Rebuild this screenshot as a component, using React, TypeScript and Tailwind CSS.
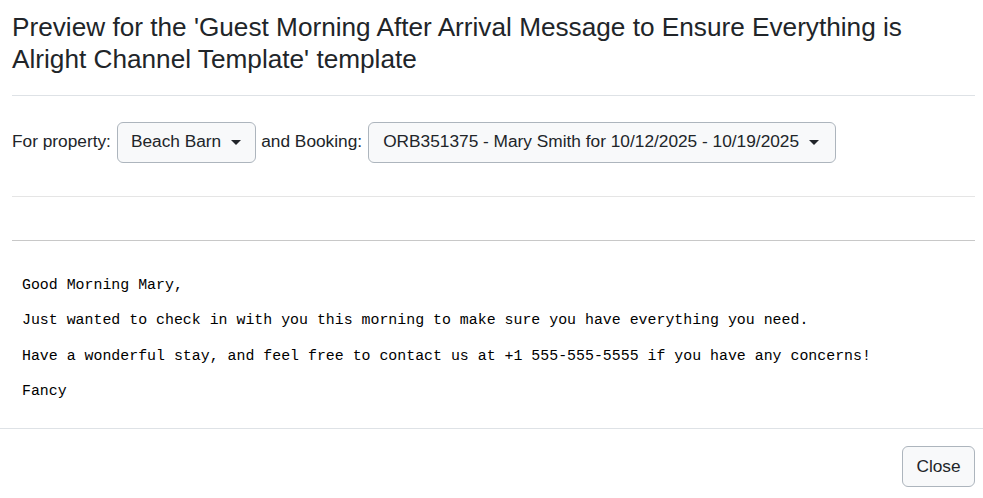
import React from "react";

const Caret = () => (
  <span className="ml-[10px] inline-block w-0 h-0 border-l-[5px] border-r-[5px] border-t-[5px] border-l-transparent border-r-transparent border-t-[#212529] align-middle" />
);

const lines = [
  "Good Morning Mary,",
  "Just wanted to check in with you this morning to make sure you have everything you need.",
  "Have a wonderful stay, and feel free to contact us at +1 555-555-5555 if you have any concerns!",
  "Fancy",
];

export default function App() {
  return (
    <div className="w-[983px] h-[498px] bg-white text-[#212529] font-['Liberation_Sans',Arial,sans-serif] overflow-hidden">
      <div className="px-3">
        <h4 className="pt-[11px] text-[26.2px] leading-[32px] font-normal">
          Preview for the 'Guest Morning After Arrival Message to Ensure Everything is Alright Channel Template' template
        </h4>
        <hr className="mt-[20px] border-t border-[#dee2e6] mr-[-4px]" />
        <div className="flex items-center h-[40px] mt-[26px] text-[17.3px]">
          <span className="mr-[6px]">For property:</span>
          <button className="h-[41px] px-[13px] pr-[14px] rounded-[6px] border border-[#adb5bd] bg-[#f8f9fa] flex items-center">
            Beach Barn
            <Caret />
          </button>
          <span className="ml-[5px] mr-[6px]">and Booking:</span>
          <button className="h-[41px] pl-[14px] pr-[16px] rounded-[6px] border border-[#adb5bd] bg-[#f8f9fa] flex items-center">
            ORB351375 - Mary Smith for 10/12/2025 - 10/19/2025
            <Caret />
          </button>
        </div>
        <hr className="mt-[34px] border-t border-[#e5e5e5] mr-[-4px]" />
        <hr className="mt-[43px] border-t border-[#c8c8c8] mr-[-4px]" />
        <div className="pt-[27px] pl-[10px] font-['Liberation_Mono','DejaVu_Sans_Mono',monospace] text-[14.9px] text-black">
          {lines.map((l) => (
            <div key={l} className="h-[35.3px] leading-[35px] whitespace-pre">
              {l}
            </div>
          ))}
        </div>
      </div>
      <div className="mt-[19px] border-t border-[#dee2e6] flex justify-end pt-[17px] pr-[8px]">
        <button className="h-[41px] w-[73px] rounded-[6px] border border-[#adb5bd] bg-[#f8f9fa] text-[17.3px]">
          Close
        </button>
      </div>
    </div>
  );
}
